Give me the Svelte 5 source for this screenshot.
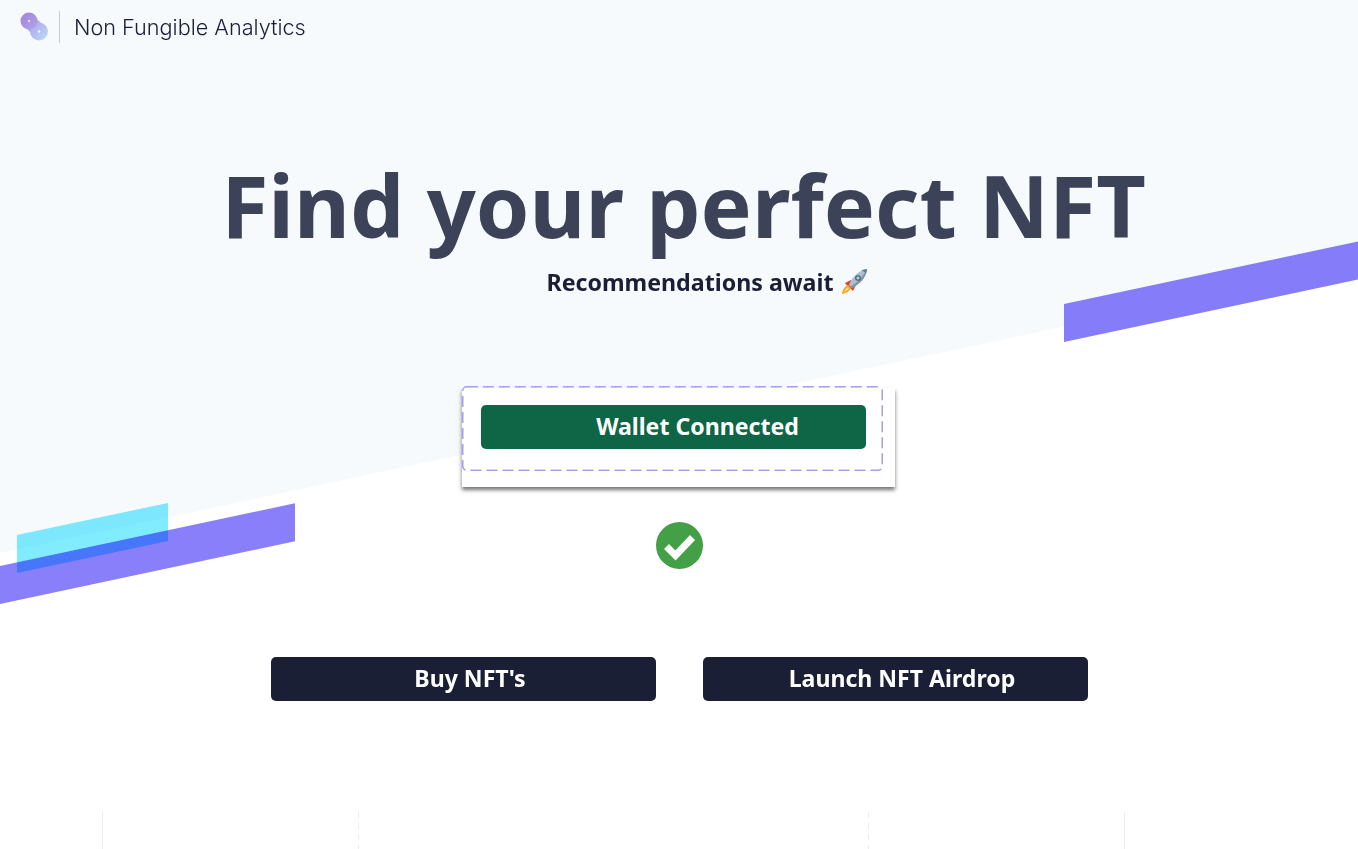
<script>
  const guides = ["solid", "dash", "dash", "solid"];
</script>

<div class="page">
  <div class="bg">
    <div class="sky"></div>
    <div class="stripe left"></div>
    <div class="stripe cyan"></div>
    <div class="stripe right"></div>
  </div>

  <header class="nav">
    <svg class="logo" width="30" height="30" viewBox="0 0 30 30">
      <defs>
        <linearGradient id="lg1" x1="0" y1="0" x2="1" y2="1">
          <stop offset="0" stop-color="#a184dc" />
          <stop offset="1" stop-color="#b3a2e8" />
        </linearGradient>
        <linearGradient id="lg2" x1="0" y1="0" x2="1" y2="1">
          <stop offset="0" stop-color="#a9a6ea" />
          <stop offset="1" stop-color="#bfdcf8" />
        </linearGradient>
      </defs>
      <path d="M6 16 L16 6 L24 14 L14 24 Z" fill="#b3a9ea" />
      <circle cx="19" cy="19.500" r="9" fill="url(#lg2)" />
      <circle cx="9" cy="9" r="8.500" fill="url(#lg1)" />
      <circle cx="9" cy="9" r="1.200" fill="#e6defa" />
      <circle cx="19" cy="19.500" r="1.200" fill="#f2f6ff" />
    </svg>
    <span class="sep"></span>
    <span class="brand">Non Fungible Analytics</span>
  </header>

  <section class="hero">
    <h1>Find your perfect NFT</h1>
    <h2>
      Recommendations await
      <svg class="rocket" width="28" height="28" viewBox="0 0 28 28">
        <path d="M5 15 L11 12 L14 16 L9 20 Z" fill="#d8452e" />
        <path d="M13 23 L16 17 L12 14 L9 19 Z" fill="#d8452e" />
        <path d="M2 25 C3 21 5 18 8 17 L11 20 C10 23 7 25 2 26 Z" fill="#f5a623" />
        <path d="M4 24 C5 22 6 20 8 19 L9 21 C8 22 6 23 4 24 Z" fill="#ffe36e" />
        <path d="M9 17 C12 9 18 3 27 1 C26 10 20 16 12 20 Z" fill="#aebfcc" />
        <path d="M27 1 C26 10 20 16 12 20 L10.500 18.500 C17 15 23 9 27 1 Z" fill="#7f93a3" />
        <path d="M21 2.600 C23 3 25 4 25.800 6 C26.500 4 27 2.500 27 1 C25 1.300 23 1.800 21 2.600 Z" fill="#5b7f9e" />
        <circle cx="18" cy="10" r="2.800" fill="#3e5569" />
        <circle cx="18" cy="10" r="1.700" fill="#9fd4ea" />
      </svg>
    </h2>
  </section>

  <div class="card">
    <div class="drop">
      <svg class="dash-frame" width="421" height="85">
        <rect x="0.750" y="0.750" width="419.500" height="83.500" rx="4" fill="none" stroke="#a99cee" stroke-width="1.500" stroke-dasharray="11 5" />
      </svg>
      <button class="btn green"><span>Wallet Connected</span></button>
    </div>
  </div>

  <svg class="check" width="47" height="47" viewBox="0 0 47 47">
    <circle cx="23.500" cy="23.500" r="23.500" fill="#43a047" />
    <path d="M10.500 24.500 L19.500 33.500 L36.500 15.500" fill="none" stroke="#fff" stroke-width="7" />
  </svg>

  <div class="actions">
    <button class="btn navy"><span>Buy NFT's</span></button>
    <button class="btn navy"><span>Launch NFT Airdrop</span></button>
  </div>

  <div class="guides">
    {#each guides as g}
      <i class={g}></i>
    {/each}
  </div>
</div>

<style>
  :global(body) {
    margin: 0;
    background: #fff;
    font-family: "Noto Sans", sans-serif;
  }
  .page {
    position: relative;
    height: 849px;
    overflow: hidden;
    display: flex;
    flex-direction: column;
    align-items: center;
  }
  .bg {
    position: absolute;
    inset: 0;
  }
  .sky {
    position: absolute;
    inset: 0;
    background: #f6fafd;
    clip-path: polygon(0 0, 100% 0, 100% 264px, 0 553px);
  }
  .stripe {
    position: absolute;
    height: 38px;
    transform: skewY(-12deg);
    transform-origin: 0 0;
  }
  .stripe.left {
    left: 0;
    top: 566px;
    width: 295px;
    background: #8a7ffb;
  }
  .stripe.cyan {
    left: 17px;
    top: 535px;
    width: 151px;
    background: #82ecff;
    mix-blend-mode: multiply;
  }
  .stripe.right {
    left: 1064px;
    top: 304px;
    width: 294px;
    background: #857cf9;
  }
  .nav {
    position: relative;
    align-self: stretch;
    display: flex;
    align-items: center;
    height: 32px;
    padding: 11px 0 0 20px;
  }
  .sep {
    width: 1px;
    height: 32px;
    margin-left: 9px;
    background: #c9c9d6;
  }
  .brand {
    margin-left: 14px;
    font-family: Inter, sans-serif;
    font-weight: 300;
    font-size: 21.650px;
    color: #1a1f36;
  }
  .hero {
    position: relative;
    display: flex;
    flex-direction: column;
    align-items: center;
    margin-left: 9px;
    padding-top: 101px;
  }
  h1 {
    margin: 0;
    font-size: 86px;
    line-height: 121px;
    font-weight: 700;
    color: #3c4257;
  }
  h2 {
    margin: 0 0 0 47px;
    display: flex;
    align-items: center;
    gap: 6px;
    font-size: 23.200px;
    line-height: 34px;
    font-weight: 700;
    color: #1a1f36;
  }
  .card {
    position: relative;
    box-sizing: border-box;
    width: 433px;
    height: 99px;
    margin-top: 89px;
    margin-right: 1px;
    background: #fff;
    box-shadow: 0 3px 4px rgba(0, 0, 0, 0.55);
  }
  .drop {
    position: relative;
    box-sizing: border-box;
    width: 421px;
    height: 85px;
    padding: 19px 19px;
    margin-top: -1px;
    top: -1px;
  }
  .dash-frame {
    position: absolute;
    left: 0;
    top: 0;
  }
  .btn {
    display: block;
    width: 385px;
    height: 44px;
    padding: 0 0 0 14px;
    border: none;
    border-radius: 5px;
    color: #fff;
    font-family: inherit;
    font-size: 23.100px;
    font-weight: 700;
    line-height: 40px;
  }
  .btn span {
    display: block;
    margin-top: -3px;
  }
  .green {
    position: relative;
    padding-left: 48px;
    background: #0f6647;
  }
  .navy {
    background: #1a1f36;
  }
  .check {
    position: relative;
    margin-top: 35px;
  }
  .actions {
    position: relative;
    display: flex;
    gap: 47px;
    margin-top: 88px;
  }
  .guides {
    position: absolute;
    left: 102px;
    top: 812px;
    width: 1023px;
    height: 37px;
    display: grid;
    grid-template-columns: 256px 510px 256px 1px;
  }
  .guides i {
    width: 1px;
    background: #ececf1;
  }
  .guides i.dash {
    background: repeating-linear-gradient(#ececf1 0 6px, transparent 6px 11px);
  }
</style>
